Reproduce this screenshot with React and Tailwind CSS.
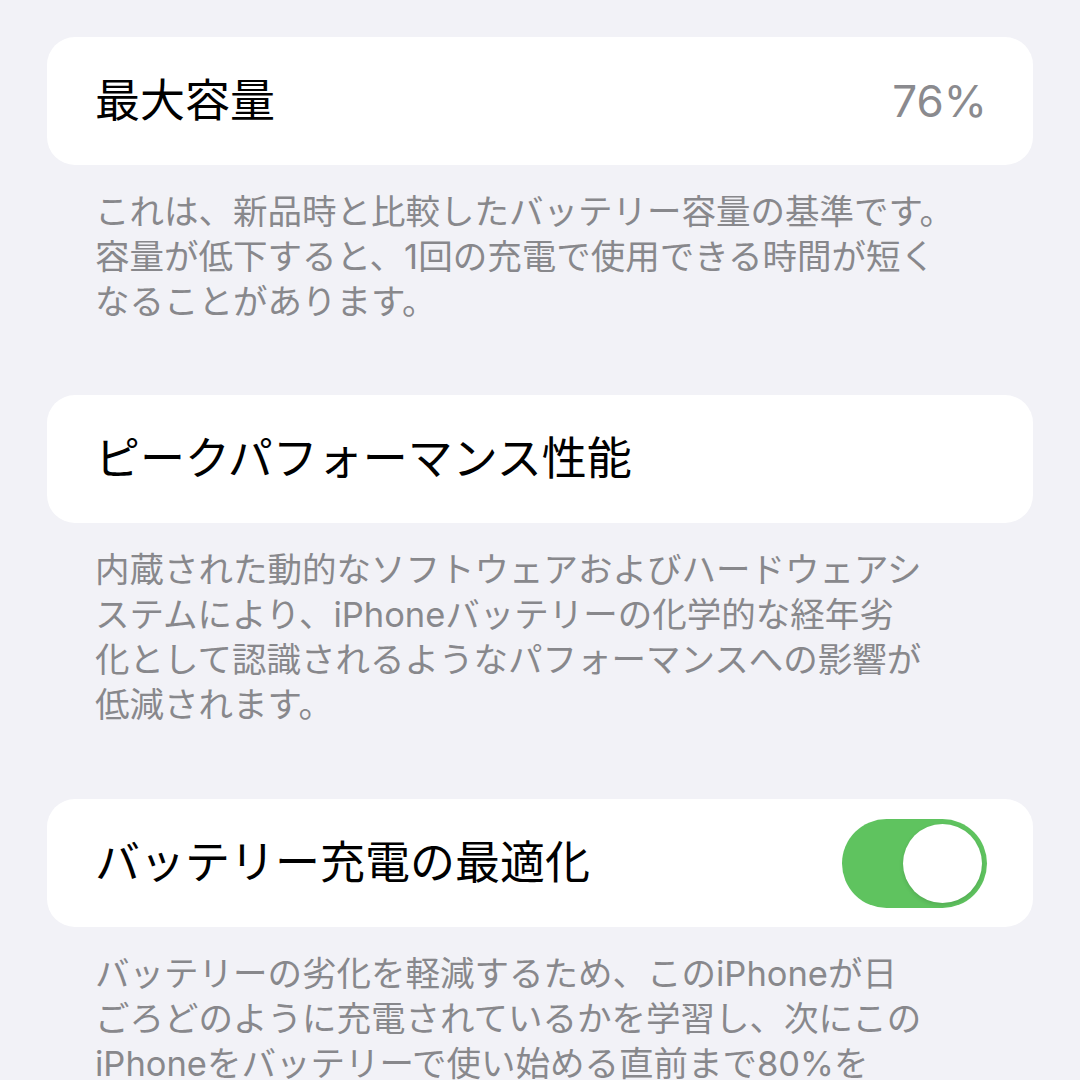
const font = { fontFamily: '"Inter", "Noto Sans CJK JP", sans-serif' };

function Card({ children }) {
  return (
    <div className="flex h-[128px] items-center justify-between rounded-[28px] bg-white pl-[48px] pr-[46px]">
      {children}
    </div>
  );
}

function Footer({ lines }) {
  return (
    <div className="mt-[24px] px-[48px] text-[34.5px] leading-[45px] text-[#88888c] whitespace-nowrap">
      {lines.map((l, i) => (
        <div key={i}>{l}</div>
      ))}
    </div>
  );
}

function Toggle({ on = true }) {
  return (
    <div
      className={
        "flex h-[89px] w-[145px] items-center rounded-full p-[5px] " +
        (on ? "justify-end bg-[#5fc35f]" : "justify-start bg-[#e5e5ea]")
      }
    >
      <div className="h-[79px] w-[79px] rounded-full bg-white shadow-[0_2px_4px_rgba(0,0,0,0.12)]" />
    </div>
  );
}

export default function App() {
  return (
    <div className="h-[1080px] w-[1080px] overflow-hidden bg-[#f2f2f7] px-[47px] pt-[37px]" style={font}>
      <Card>
        <span className="text-[45px] text-black">最大容量</span>
        <span className="text-[44px] text-[#8a8a8e]">76%</span>
      </Card>
      <Footer
        lines={[
          "これは、新品時と比較したバッテリー容量の基準です。",
          "容量が低下すると、1回の充電で使用できる時間が短く",
          "なることがあります。",
        ]}
      />

      <div className="mt-[71px]">
        <Card>
          <span className="text-[45px] text-black">ピークパフォーマンス性能</span>
        </Card>
      </div>
      <Footer
        lines={[
          "内蔵された動的なソフトウェアおよびハードウェアシ",
          "ステムにより、iPhoneバッテリーの化学的な経年劣",
          "化として認識されるようなパフォーマンスへの影響が",
          "低減されます。",
        ]}
      />

      <div className="mt-[72px]">
        <Card>
          <span className="text-[45px] text-black">バッテリー充電の最適化</span>
          <Toggle on />
        </Card>
      </div>
      <Footer
        lines={[
          "バッテリーの劣化を軽減するため、このiPhoneが日",
          "ごろどのように充電されているかを学習し、次にこの",
          "iPhoneをバッテリーで使い始める直前まで80%を",
          "超える充電を控えます。",
        ]}
      />
    </div>
  );
}
